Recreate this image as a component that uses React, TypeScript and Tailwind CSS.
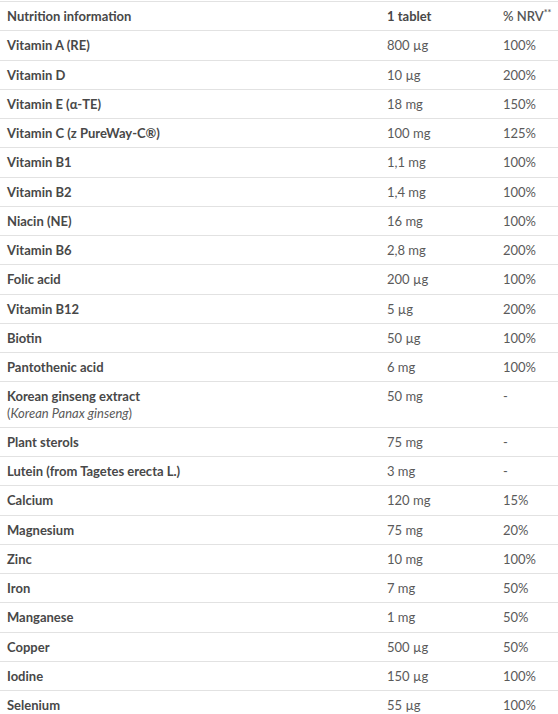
const rows: { name: string; sub?: string; amount: string; nrv: string }[] = [
  { name: "Vitamin A (RE)", amount: "800 µg", nrv: "100%" },
  { name: "Vitamin D", amount: "10 µg", nrv: "200%" },
  { name: "Vitamin E (α-TE)", amount: "18 mg", nrv: "150%" },
  { name: "Vitamin C (z PureWay-C®)", amount: "100 mg", nrv: "125%" },
  { name: "Vitamin B1", amount: "1,1 mg", nrv: "100%" },
  { name: "Vitamin B2", amount: "1,4 mg", nrv: "100%" },
  { name: "Niacin (NE)", amount: "16 mg", nrv: "100%" },
  { name: "Vitamin B6", amount: "2,8 mg", nrv: "200%" },
  { name: "Folic acid", amount: "200 µg", nrv: "100%" },
  { name: "Vitamin B12", amount: "5 µg", nrv: "200%" },
  { name: "Biotin", amount: "50 µg", nrv: "100%" },
  { name: "Pantothenic acid", amount: "6 mg", nrv: "100%" },
  { name: "Korean ginseng extract", sub: "Korean Panax ginseng", amount: "50 mg", nrv: "-" },
  { name: "Plant sterols", amount: "75 mg", nrv: "-" },
  { name: "Lutein (from Tagetes erecta L.)", amount: "3 mg", nrv: "-" },
  { name: "Calcium", amount: "120 mg", nrv: "15%" },
  { name: "Magnesium", amount: "75 mg", nrv: "20%" },
  { name: "Zinc", amount: "10 mg", nrv: "100%" },
  { name: "Iron", amount: "7 mg", nrv: "50%" },
  { name: "Manganese", amount: "1 mg", nrv: "50%" },
  { name: "Copper", amount: "500 µg", nrv: "50%" },
  { name: "Iodine", amount: "150 µg", nrv: "100%" },
  { name: "Selenium", amount: "55 µg", nrv: "100%" },
];

export default function App() {
  return (
    <div className="bg-white pt-px font-['Lato',sans-serif] text-[13px] leading-[16.25px] text-[#5a5a5a]">
      <table className="w-[558px] table-fixed border-collapse">
        <colgroup>
          <col className="w-[380px]" />
          <col className="w-[116px]" />
          <col />
        </colgroup>
        <thead>
          <tr className="border-y border-[#e2e2e2]">
            <th className="px-[7px] py-[6px] text-left font-bold text-[#484848]">Nutrition information</th>
            <th className="px-[7px] py-[6px] text-left font-bold text-[#484848]">1 tablet</th>
            <th className="whitespace-nowrap py-[6px] pl-[7px] pr-0 text-left font-semibold text-[#555]">
              % NRV<span className="align-top text-[9px] leading-[10px]">**</span>
            </th>
          </tr>
        </thead>
        <tbody>
          {rows.map((r) => (
            <tr key={r.name} className="border-b border-[#e2e2e2] align-top">
              <td className="px-[7px] py-[6px] font-bold text-[#484848]">
                {r.name}
                {r.sub && (
                  <span className="block font-normal text-[#5a5a5a]">
                    (<em>{r.sub}</em>)
                  </span>
                )}
              </td>
              <td className="px-[7px] py-[6px]">{r.amount}</td>
              <td className="px-[7px] py-[6px]">{r.nrv}</td>
            </tr>
          ))}
        </tbody>
      </table>
    </div>
  );
}
